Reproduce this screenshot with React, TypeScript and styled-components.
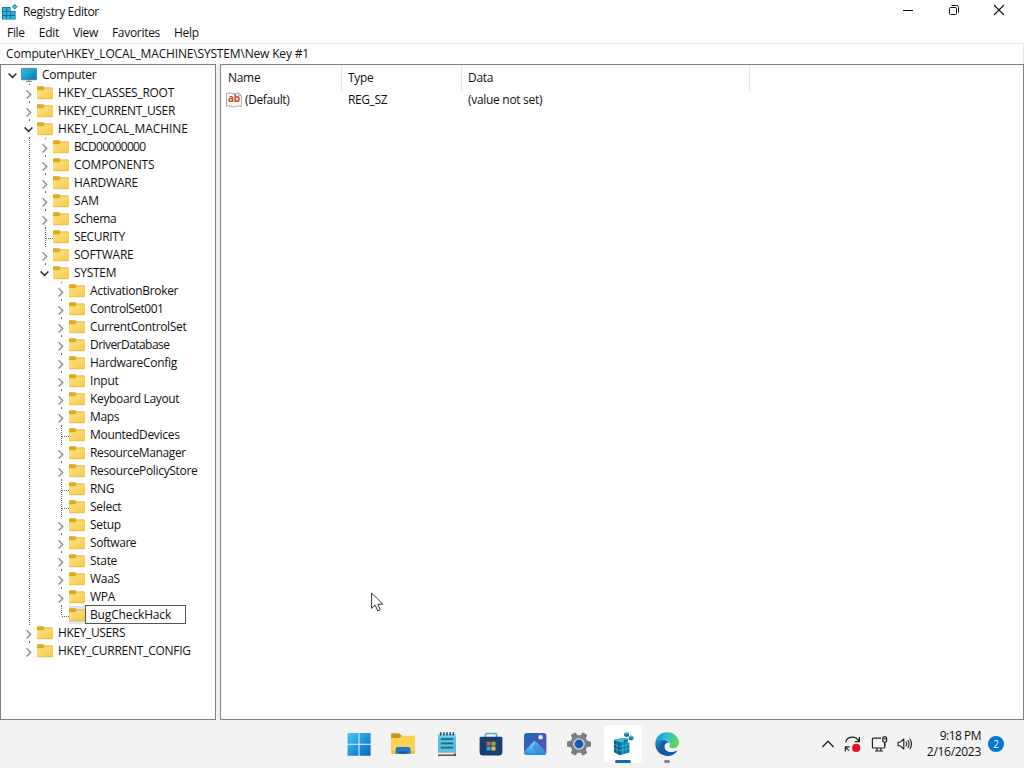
import styled, { createGlobalStyle } from "styled-components";

const GlobalStyle = createGlobalStyle`
  * {
    box-sizing: border-box;
  }
  body {
    margin: 0;
    overflow: hidden;
    background: #f3f3f3;
    color: #111;
    font-family: "Open Sans", "Noto Sans", sans-serif;
    font-size: 12px;
    line-height: 18px;
  }
  svg {
    display: block;
    flex: none;
  }
`;

const Screen = styled.div`
  width: 1024px;
  height: 768px;
  display: flex;
  flex-direction: column;
`;

const Text = styled.span<{ $track?: number }>`
  white-space: pre;
  letter-spacing: ${(props) => props.$track ?? -0.3}px;
`;

const TitleBar = styled.header`
  height: 24px;
  display: flex;
  justify-content: space-between;
  padding: 0 2px;
  background: #fff;
`;

const TitleText = styled.div`
  display: flex;
  align-items: center;
  gap: 5px;
  height: 24px;
`;

const WindowButtons = styled.div`
  display: flex;
`;

const WindowButton = styled.div`
  width: 45.5px;
  height: 20px;
  display: flex;
  align-items: center;
  justify-content: center;
`;

const MenuBar = styled.nav`
  height: 19px;
  display: flex;
  gap: 14px;
  padding-left: 7px;
  background: #fff;
`;

const AddressBar = styled.div`
  height: 21px;
  padding: 1px 0 0 6px;
  border-top: 1px solid #e6e6e6;
  border-right: 1px solid #e6e6e6;
  background: #fff;
`;

const Panes = styled.main`
  height: 656px;
  display: flex;
  gap: 4px;
  background: #f0f0f0;
`;

const TreePane = styled.ul`
  width: 216px;
  margin: 0;
  padding: 1px 0 0 4px;
  list-style: none;
  border: 1px solid #828282;
  background: #fff;
`;

const TreeRow = styled.li`
  height: 18px;
  display: flex;
  align-items: center;
`;

const NodeIcon = styled.div<{ $selected?: boolean }>`
  width: 16px;
  height: 18px;
  display: flex;
  align-items: center;
  background: ${(props) => (props.$selected ? "#d9e8e8" : "transparent")};
`;

const NodeLabel = styled(Text)`
  padding-left: 5px;
`;

const EditBox = styled.div`
  width: 101px;
  height: 19px;
  margin-top: -1px;
  padding-left: 4px;
  border: 1px solid #555;
  background: #fff;
  line-height: 17px;
`;

const ListPane = styled.section`
  flex: 1;
  border: 1px solid #828282;
  background: #fff;
`;

const ListRow = styled.div`
  display: grid;
  grid-template-columns: 121px 120px 288px;
`;

const HeaderRow = styled(ListRow)`
  height: 26px;
`;

const HeaderCell = styled.div`
  padding: 4px 0 0 6px;
  border-right: 1px solid #e8e8e8;
  &:first-child {
    padding-left: 7px;
  }
`;

const ValueCell = styled.div`
  height: 18px;
  display: flex;
  align-items: center;
  gap: 3px;
  padding-left: 6px;
  &:first-child {
    padding-left: 5px;
  }
`;

const Taskbar = styled.footer`
  height: 48px;
  display: grid;
  grid-template-columns: 337px 352px 1fr;
  background: #f3f3f3;
`;

const Apps = styled.div`
  grid-column: 2;
  display: flex;
`;

const AppSlot = styled.div`
  width: 44px;
  height: 48px;
  display: flex;
  justify-content: center;
  align-items: center;
`;

const AppButton = styled.div<{ $active?: boolean }>`
  width: 38px;
  height: 38px;
  display: flex;
  flex-direction: column;
  align-items: center;
  padding-top: 7px;
  border-radius: 4px;
  background: ${(props) => (props.$active ? "#fff" : "transparent")};
`;

const Indicator = styled.div<{ $active?: boolean }>`
  width: ${(props) => (props.$active ? 16 : 6)}px;
  height: 3px;
  margin-top: 4px;
  border-radius: 2px;
  background: ${(props) => (props.$active ? "#0f6cbd" : "#868686")};
`;

const Tray = styled.div`
  display: flex;
  align-items: center;
  justify-content: flex-end;
  padding-right: 20px;
`;

const TrayIcons = styled.div`
  display: flex;
  align-items: center;
  gap: 9px;
  margin-right: 12px;
`;

const Clock = styled.div`
  width: 56px;
  display: flex;
  flex-direction: column;
  align-items: flex-end;
  line-height: 16px;
`;

const Badge = styled.div`
  width: 16px;
  height: 16px;
  margin-left: 7px;
  border-radius: 50%;
  background: #0078d4;
  color: #fff;
  font-size: 10px;
  line-height: 16px;
  text-align: center;
`;

const Pointer = styled.svg`
  position: absolute;
  left: 371px;
  top: 592px;
`;

type Kind = "open" | "closed" | "leaf";

interface TreeNode {
  name: string;
  depth: number;
  kind: Kind;
  last?: boolean;
  editing?: boolean;
  track?: number;
}

const nodes: TreeNode[] = [
  { name: "HKEY_CLASSES_ROOT", depth: 1, kind: "closed", track: -0.27 },
  { name: "HKEY_CURRENT_USER", depth: 1, kind: "closed", track: -0.35 },
  { name: "HKEY_LOCAL_MACHINE", depth: 1, kind: "open", track: -0.06 },
  { name: "BCD00000000", depth: 2, kind: "closed", track: -0.68 },
  { name: "COMPONENTS", depth: 2, kind: "closed", track: -0.18 },
  { name: "HARDWARE", depth: 2, kind: "closed", track: -0.15 },
  { name: "SAM", depth: 2, kind: "closed", track: 0.1 },
  { name: "Schema", depth: 2, kind: "closed" },
  { name: "SECURITY", depth: 2, kind: "leaf", track: -0.35 },
  { name: "SOFTWARE", depth: 2, kind: "closed", track: -0.25 },
  { name: "SYSTEM", depth: 2, kind: "open", last: true },
  { name: "ActivationBroker", depth: 3, kind: "closed" },
  { name: "ControlSet001", depth: 3, kind: "closed", track: -0.48 },
  { name: "CurrentControlSet", depth: 3, kind: "closed", track: -0.35 },
  { name: "DriverDatabase", depth: 3, kind: "closed", track: -0.55 },
  { name: "HardwareConfig", depth: 3, kind: "closed" },
  { name: "Input", depth: 3, kind: "closed", track: -0.2 },
  { name: "Keyboard Layout", depth: 3, kind: "closed", track: -0.35 },
  { name: "Maps", depth: 3, kind: "closed", track: -0.35 },
  { name: "MountedDevices", depth: 3, kind: "leaf" },
  { name: "ResourceManager", depth: 3, kind: "closed", track: -0.38 },
  { name: "ResourcePolicyStore", depth: 3, kind: "closed", track: -0.34 },
  { name: "RNG", depth: 3, kind: "leaf" },
  { name: "Select", depth: 3, kind: "leaf" },
  { name: "Setup", depth: 3, kind: "closed" },
  { name: "Software", depth: 3, kind: "closed", track: -0.45 },
  { name: "State", depth: 3, kind: "closed" },
  { name: "WaaS", depth: 3, kind: "closed" },
  { name: "WPA", depth: 3, kind: "closed" },
  { name: "BugCheckHack", depth: 3, kind: "leaf", last: true, editing: true },
  { name: "HKEY_USERS", depth: 1, kind: "closed", track: -0.37 },
  { name: "HKEY_CURRENT_CONFIG", depth: 1, kind: "closed", last: true, track: -0.26 },
];

// one 16px column of the tree: blank or a passing guide
function GuideCell({ line }: { line?: boolean }) {
  return (
    <svg width="16" height="18">
      {line && <path d="M8.5 0V18" stroke="#666" strokeDasharray="1 1" />}
    </svg>
  );
}

function Expander({ kind, last }: { kind: Kind; last?: boolean }) {
  return (
    <svg width="16" height="18" fill="none">
      {kind === "leaf" && (
        <path
          d={`M8.5 0V${last ? 10 : 18}M9 10.5H16`}
          stroke="#666"
          strokeDasharray="1 1"
        />
      )}
      {kind !== "leaf" && <path d="M8.5 0V1" stroke="#666" />}
      {kind !== "leaf" && !last && <path d="M8.5 17V18" stroke="#666" />}
      {kind === "closed" && (
        <path d="M5.6 6.3L9.6 10.4L5.6 14.5" stroke="#929292" strokeWidth="1.5" />
      )}
      {kind === "open" && (
        <path d="M3.6 7.5L7.5 11.4L11.4 7.5" stroke="#333" strokeWidth="1.6" />
      )}
    </svg>
  );
}

function Folder() {
  return (
    <svg width="16" height="14" viewBox="0 0 16 14">
      <defs>
        <linearGradient id="folder" x1="0" y1="0" x2="1" y2="1">
          <stop offset="0" stopColor="#fde28a" />
          <stop offset="1" stopColor="#f8c944" />
        </linearGradient>
      </defs>
      <path d="M0 1Q0 .2.8.2H6L7.6 1.6H15Q16 1.6 16 2.4V6H0Z" fill="#dfa722" />
      <path d="M0 4.2H6.2L7.8 2.2H15.2Q16 2.2 16 3V12.2Q16 13 15.2 13H.8Q0 13 0 12.2Z" fill="url(#folder)" />
      <path d="M.4 12.8H15.6" stroke="#e3b040" strokeWidth=".6" />
    </svg>
  );
}

function Computer() {
  return (
    <svg width="16" height="16" viewBox="0 0 16 16">
      <defs>
        <linearGradient id="monitor" x1="0" y1="0" x2="1" y2="1">
          <stop offset="0" stopColor="#31c3e4" />
          <stop offset="1" stopColor="#0873b4" />
        </linearGradient>
      </defs>
      <rect x=".4" y="1.4" width="15.2" height="11.4" rx=".8" fill="url(#monitor)" stroke="#27718f" strokeWidth=".7" />
      <path d="M5 14.5H11" stroke="#899ba5" />
      <path d="M8 13V14" stroke="#9ab" strokeWidth="2" />
    </svg>
  );
}

function RegistryIcon() {
  return (
    <svg width="16" height="16" viewBox="0 0 16 16">
      <path d="M0 3H8.6V7H13.6V15.6H0Z" fill="#0c6c94" />
      <path
        d="M.8 3.8H4V6.9H.8ZM4.9 3.8H8.2V6.9H4.9ZM.8 7.8H4V11H.8ZM4.9 7.8H8.2V11H4.9ZM9.1 7.8H12.8V11H9.1ZM.8 11.9H4V14.9H.8ZM4.9 11.9H8.2V14.9H4.9ZM9.1 11.9H12.8V14.9H9.1Z"
        fill="#2db4e2"
      />
      <path d="M12.6 0L15.6 2.8L12.6 5.6L9.8 2.8Z" fill="#2188b5" />
      <path d="M12.6 1.4L14.1 2.8L12.6 4.2L11.2 2.8Z" fill="#5fc8e8" />
    </svg>
  );
}

const PageShape = styled.div`
  width: 16px;
  height: 16px;
  display: grid;
  & > * {
    grid-area: 1 / 1;
  }
`;

const PageLetters = styled.span`
  color: #c8432c;
  font-size: 10px;
  font-weight: 700;
  line-height: 13px;
  letter-spacing: -0.3px;
  text-align: center;
`;

function StringIcon() {
  return (
    <PageShape>
      <svg width="16" height="16" viewBox="0 0 16 16">
        <path
          d="M.5 1.5Q3 .3 5.5 1.3T10.5 1.3L12.4 .8L15.4 3.5V14.6Q12.5 13 10 14.4T5 14.4T.5 14.2Z"
          fill="#fbfaf7"
          stroke="#a5a29b"
          strokeWidth=".9"
        />
        <path d="M12.4 .8V3.5H15.4" fill="none" stroke="#a5a29b" strokeWidth=".8" />
      </svg>
      <PageLetters>ab</PageLetters>
    </PageShape>
  );
}

function StartIcon() {
  return (
    <svg width="24" height="24" viewBox="0 0 24 24">
      <defs>
        <linearGradient id="start" x1="0" y1="0" x2="1" y2="1">
          <stop offset="0" stopColor="#45c5f5" />
          <stop offset="1" stopColor="#0067cc" />
        </linearGradient>
      </defs>
      <path
        d="M1.3 .9H11.5V11.8H.5V1.7Q.5 .9 1.3 .9ZM12.5 .9H22.8Q23.6 .9 23.6 1.7V11.8H12.5ZM.5 12.8H11.5V23.8H1.3Q.5 23.8 .5 23ZM12.5 12.8H23.6V23Q23.6 23.8 22.8 23.8H12.5Z"
        fill="url(#start)"
      />
    </svg>
  );
}

function ExplorerIcon() {
  return (
    <svg width="24" height="24" viewBox="0 0 24 24">
      <path d="M0 2.6Q0 1.2 1.4 1.2H8L11 4V8H0Z" fill="#cf961c" />
      <path d="M0 6H8.5L11 3.8H22.8Q24 3.8 24 5V20.6Q24 21.8 22.8 21.8H1.2Q0 21.8 0 20.6Z" fill="#fbd154" />
      <path d="M0 19H24V20.6Q24 21.8 22.8 21.8H1.2Q0 21.8 0 20.6Z" fill="#f5c03c" />
      <path d="M4.6 21.8V17Q4.6 15 6.6 15H17.6Q19.6 15 19.6 17V21.8Z" fill="#1f79c8" />
      <path d="M8 21.8V20.6Q8 19.4 9.2 19.4H15Q16.2 19.4 16.2 20.6V21.8Z" fill="#14599f" />
    </svg>
  );
}

function NotepadIcon() {
  return (
    <svg width="24" height="24" viewBox="0 0 24 24">
      <path d="M3 2H21V22H3Z" fill="#5cc0da" />
      <path d="M3 2H21V5H3Z" fill="#77d4eb" />
      <path d="M3 21.5H21V24H3Z" fill="#7d4b2a" />
      <path d="M3 20.8H20L18.6 22.4H3Z" fill="#ece7df" />
      <path d="M5.7 .2V3.4M8.9 .2V3.4M12 .2V3.4M15.2 .2V3.4M18.3 .2V3.4" stroke="#17495e" strokeWidth="1.5" />
      <path d="M6.5 7.2H17.5M6.5 11.4H17.5M6.5 15.6H17.5" stroke="#1b6a88" strokeWidth="1.7" strokeLinecap="round" />
    </svg>
  );
}

function StoreIcon() {
  return (
    <svg width="24" height="24" viewBox="0 0 24 24">
      <path d="M6.4 6V2.9Q6.4 1.5 7.8 1.5H16.2Q17.6 1.5 17.6 2.9V6" fill="none" stroke="#41b5d8" strokeWidth="1.6" />
      <path d="M.6 6Q.6 4.8 1.8 4.8H22.2Q23.4 4.8 23.4 6V20Q23.4 23.6 19.8 23.6H4.2Q.6 23.6 .6 20Z" fill="#173f72" />
      <path d="M7.6 9.6H11.6V13.6H7.6Z" fill="#e35735" />
      <path d="M12.5 9.6H16.5V13.6H12.5Z" fill="#82b93c" />
      <path d="M7.6 14.5H11.6V18.5H7.6Z" fill="#3ba5e3" />
      <path d="M12.5 14.5H16.5V18.5H12.5Z" fill="#f2bc36" />
    </svg>
  );
}

function PhotosIcon() {
  return (
    <svg width="24" height="24" viewBox="0 0 24 24">
      <defs>
        <linearGradient id="sky" x1="0" y1="0" x2="1" y2="1">
          <stop offset="0" stopColor="#1c6cb8" />
          <stop offset="1" stopColor="#6c48b4" />
        </linearGradient>
        <linearGradient id="hill" x1="0" y1="0" x2="0" y2="1">
          <stop offset="0" stopColor="#73d5f5" />
          <stop offset="1" stopColor="#238be1" />
        </linearGradient>
        <clipPath id="frame">
          <rect x="1" y="1" width="22.4" height="22" rx="3" />
        </clipPath>
      </defs>
      <g clipPath="url(#frame)">
        <rect x="1" y="1" width="23" height="22" fill="url(#sky)" />
        <path d="M1 19.5L10.2 10Q11.8 8.4 13.4 10L24 21.4V24H1Z" fill="url(#hill)" />
        <path d="M12.6 9.3L24 21.4V24H16L9.6 16Z" fill="#2f7cd0" opacity=".5" />
        <circle cx="17.6" cy="5.2" r="2.2" fill="#e9f2fb" />
      </g>
    </svg>
  );
}

function SettingsIcon() {
  return (
    <svg width="24" height="24" viewBox="0 0 24 24">
      <g fill="#7b8084">
        <circle cx="12" cy="12" r="9" />
        {[0, 60, 120].map((angle) => (
          <rect key={angle} x="0" y="9" width="24" height="6" rx="1.6" transform={`rotate(${angle} 12 12)`} />
        ))}
      </g>
      <circle cx="12" cy="12" r="5.8" fill="#d3d8dd" />
      <circle cx="12" cy="12" r="4.4" fill="#0f5cae" />
    </svg>
  );
}

function RegistryAppIcon() {
  return (
    <svg width="24" height="24" viewBox="0 0 24 24">
      <path d="M3 8L11 6L18.4 8.5V20.5L9 23.2L3 20Z" fill="#087eae" />
      <path d="M3 8L9 10.5V23.2L3 20Z" fill="#075e88" />
      <path d="M3 8L11 6L18.4 8.5L9 10.5Z" fill="#35b6d8" />
      <path d="M12 9.8V22.3M15.2 9.2V21.4M9 14.5L18.4 12.4M9 18.9L18.4 16.4M6 9.5V21.4M3 12L9 14.5M3 16L9 18.9M6 7.4L12.4 9.4M9 6.8L15.8 8.8" stroke="#6fcfe4" strokeWidth=".5" />
      <path d="M13 5L18.7 8.2L18.4 11L12.6 9Z" fill="#fff" />
      <g fill="#13799e">
        <path d="M15.6 .2L18 1.3V4L15.6 5.2L13.2 4V1.3Z" />
        <path d="M20 3.5L22.4 4.7V7.4L20 8.6L17.6 7.4V4.7Z" />
        <path d="M14.8 6L17 7V9.5L14.8 10.6L12.6 9.5V7Z" />
      </g>
      <path d="M15.6 .2L18 1.3L15.6 2.4L13.2 1.3ZM20 3.5L22.4 4.7L20 5.8L17.6 4.7ZM14.8 6L17 7L14.8 8L12.6 7Z" fill="#48bdd7" />
    </svg>
  );
}

function EdgeIcon() {
  return (
    <svg width="24" height="24" viewBox="0 0 24 24">
      <defs>
        <linearGradient id="wave" x1="0" y1="0" x2="1" y2="0.3">
          <stop offset="0" stopColor="#1692d8" />
          <stop offset=".5" stopColor="#28bfd0" />
          <stop offset="1" stopColor="#64d65a" />
        </linearGradient>
        <linearGradient id="tail" x1="0" y1="0" x2="0" y2="1">
          <stop offset="0" stopColor="#1c86cf" />
          <stop offset="1" stopColor="#114a90" />
        </linearGradient>
      </defs>
      <path d="M.3 11.5C.5 5 5.5 .3 12 .3C19 .3 24 5.2 24 10.6C24 14.2 21.2 16.6 17.8 16.6C15.2 16.6 14 15.4 14 14.6C14 14 14.8 13.6 14.8 12C14.8 9.6 12.4 7.6 9 7.6C4.6 7.6 1 9.8 .3 11.5Z" fill="url(#wave)" />
      <path d="M.3 11.5C1 8.6 5 6.9 9 7.6C12 8.1 14 9.6 14.6 11.2C13.8 10.4 9.4 10.6 9.4 14.8C9.4 18.5 13.3 20.8 17 20.2C19.2 19.8 21 18.8 22.2 18.4C20.2 21.9 16.4 23.9 12.2 23.8C5.5 23.7 .1 18.4 .3 11.5Z" fill="url(#tail)" />
      <path d="M7.8 8.7C3.8 11 4.6 19.8 11 23.5C15.6 24.4 20 22.2 22.2 18.4C17 21.4 9.4 20.4 9.4 14.8C9.4 12.4 11 11 12.2 10.6C11 9.4 9.6 8.6 7.8 8.7Z" fill="#155bab" />
      <path d="M14.8 11.6C14.8 13.4 14 14 14 14.6C14 15.4 15.2 16.6 17.8 16.6C20 16.6 22 15.6 23.2 14C23 16.4 22.4 17.8 22 18.4C17.4 20.6 11.2 18.6 11.2 14.4C11.2 12.6 12.8 11.2 14.8 11.6Z" fill="#f3f3f3" />
    </svg>
  );
}

function TrayGlyphs() {
  return (
    <TrayIcons>
      <svg width="14" height="16" fill="none" stroke="#222" strokeWidth="1.3">
        <path d="M1.4 11L7 5.2L12.6 11" />
      </svg>
      <svg width="18" height="18" fill="none" stroke="#222" strokeWidth="1.2">
        <path d="M1.6 7.4C2.2 4.4 5 2.2 8.4 2.2C11.6 2.2 13.8 3.8 14.8 6.4M15.4 2V6.6H10.8M5.8 11.8H1.4V16.4M1.8 12.4L5 15.6" />
        <circle cx="12.2" cy="12.9" r="4.1" fill="#e81123" stroke="none" />
      </svg>
      <svg width="17" height="18" fill="none" stroke="#222" strokeWidth="1.2">
        <path d="M10 3.2H2.4Q1.4 3.2 1.4 4.2V12Q1.4 13 2.4 13H12.8Q13.8 13 13.8 12V8.2M6 13V16M9.8 13V16M4 16H12" />
        <rect x="11.8" y="1.8" width="3.8" height="5.2" rx="1" />
        <path d="M13.7 7V11M12.6 3.8H14.8" />
      </svg>
      <svg width="16" height="16" fill="none" stroke="#222" strokeWidth="1.1" strokeLinejoin="round">
        <path d="M1 6.2H3.2L6.8 3V13L3.2 9.8H1Z" />
        <path d="M9 6Q10.4 8 9 10M11 4.6Q13.3 8 11 11.4M13 3.2Q16 8 13 12.8" strokeLinecap="round" />
      </svg>
    </TrayIcons>
  );
}

function App() {
  return (
    <Screen>
      <GlobalStyle />
      <TitleBar>
        <TitleText>
          <RegistryIcon />
          <Text $track={-0.35}>Registry Editor</Text>
        </TitleText>
        <WindowButtons>
          <WindowButton>
            <svg width="12" height="12">
              <path d="M1 6.5H11" stroke="#111" />
            </svg>
          </WindowButton>
          <WindowButton>
            <svg width="12" height="12" fill="none" stroke="#111">
              <rect x="1.5" y="3.5" width="7" height="7" rx="1" />
              <path d="M3.5 1.5H8.5Q10.5 1.5 10.5 3.5V8.5" />
            </svg>
          </WindowButton>
          <WindowButton>
            <svg width="12" height="12">
              <path d="M1 1L11 11M11 1L1 11" stroke="#111" strokeWidth="1.1" />
            </svg>
          </WindowButton>
        </WindowButtons>
      </TitleBar>
      <MenuBar>
        {["File", "Edit", "View", "Favorites", "Help"].map((item) => (
          <Text key={item}>{item}</Text>
        ))}
      </MenuBar>
      <AddressBar>
        <Text $track={-0.17}>Computer\HKEY_LOCAL_MACHINE\SYSTEM\New Key #1</Text>
      </AddressBar>
      <Panes>
        <TreePane>
          <TreeRow>
            <svg width="16" height="18" fill="none">
              <path d="M3.6 7.5L7.5 11.4L11.4 7.5" stroke="#333" strokeWidth="1.6" />
            </svg>
            <NodeIcon>
              <Computer />
            </NodeIcon>
            <NodeLabel $track={-0.25}>Computer</NodeLabel>
          </TreeRow>
          {nodes.map((node) => (
            <TreeRow key={node.name}>
              {Array.from({ length: node.depth }, (_, level) => (
                <GuideCell key={level} line={level === 1} />
              ))}
              <Expander kind={node.kind} last={node.last} />
              <NodeIcon $selected={node.editing}>
                <Folder />
              </NodeIcon>
              {node.editing ? (
                <EditBox>
                  <Text $track={-0.15}>{node.name}</Text>
                </EditBox>
              ) : (
                <NodeLabel $track={node.track}>{node.name}</NodeLabel>
              )}
            </TreeRow>
          ))}
        </TreePane>
        <ListPane>
          <HeaderRow>
            {["Name", "Type", "Data"].map((title) => (
              <HeaderCell key={title}>
                <Text>{title}</Text>
              </HeaderCell>
            ))}
          </HeaderRow>
          <ListRow>
            <ValueCell>
              <StringIcon />
              <Text $track={-0.4}>(Default)</Text>
            </ValueCell>
            <ValueCell>
              <Text $track={-0.4}>REG_SZ</Text>
            </ValueCell>
            <ValueCell>
              <Text>(value not set)</Text>
            </ValueCell>
          </ListRow>
        </ListPane>
      </Panes>
      <Taskbar>
        <Apps>
          {[StartIcon, ExplorerIcon, NotepadIcon, StoreIcon, PhotosIcon, SettingsIcon].map((Icon, i) => (
            <AppSlot key={i}>
              <Icon />
            </AppSlot>
          ))}
          <AppSlot>
            <AppButton $active>
              <RegistryAppIcon />
              <Indicator $active />
            </AppButton>
          </AppSlot>
          <AppSlot>
            <AppButton>
              <EdgeIcon />
              <Indicator />
            </AppButton>
          </AppSlot>
        </Apps>
        <Tray>
          <TrayGlyphs />
          <Clock>
            <Text $track={-0.5}>9:18 PM</Text>
            <Text>2/16/2023</Text>
          </Clock>
          <Badge>2</Badge>
        </Tray>
      </Taskbar>
      <Pointer width="13" height="20" viewBox="0 0 13 20">
        <path d="M.6 .9V16.4L4.2 13.1L6.7 18.9L9.2 17.8L6.8 12.2H11.8Z" fill="#fff" stroke="#222" strokeWidth=".9" />
      </Pointer>
    </Screen>
  );
}

export default App;
